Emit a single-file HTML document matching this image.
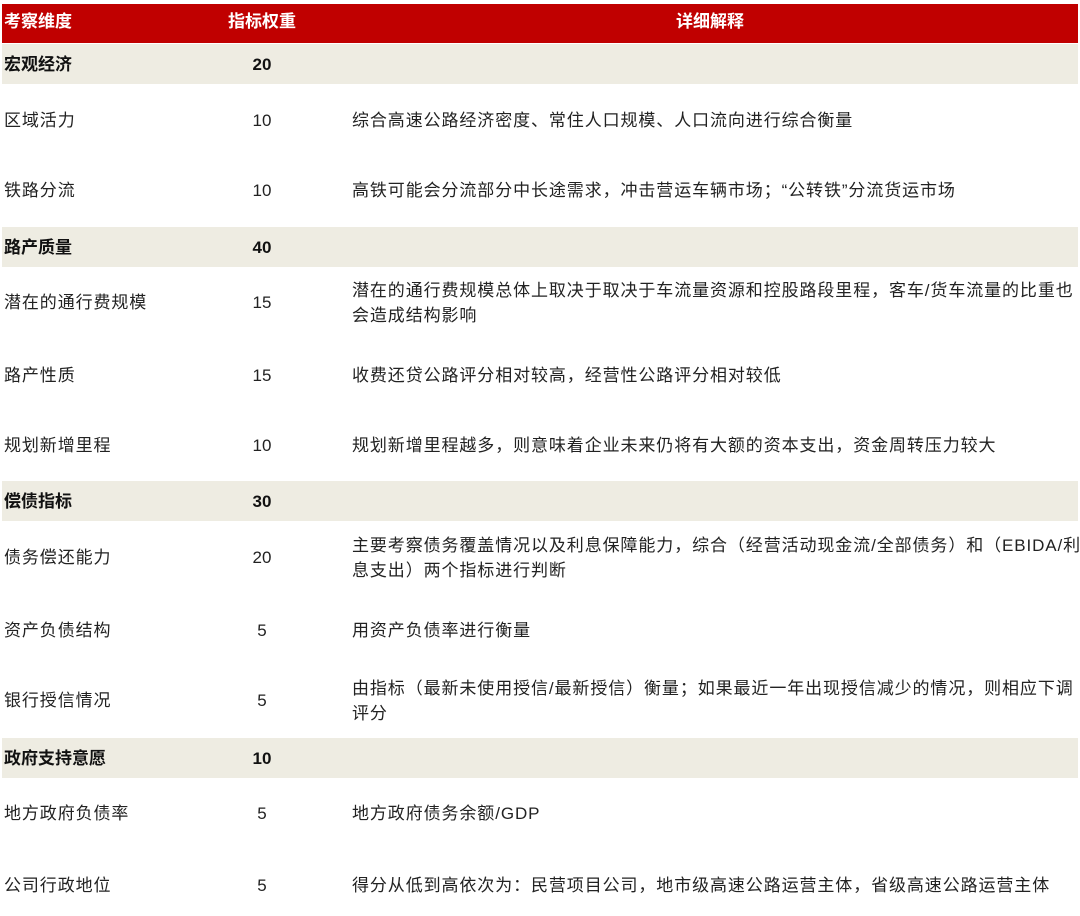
<!DOCTYPE html>
<html><head><meta charset="utf-8"><style>
body{margin:0;width:1080px;height:916px;background:#fff;position:relative;overflow:hidden;font-family:"Liberation Sans","Noto Sans CJK SC",sans-serif;font-size:17px;color:#222;letter-spacing:0.9px}
.hd{position:absolute;left:2px;top:4px;width:1076px;height:39px;background:#c00000}
.band{position:absolute;left:2px;width:1076px;height:40px;background:#eeece2}
.t{position:absolute;line-height:25px;white-space:nowrap}
.w{color:#fff;font-weight:bold;letter-spacing:0}
.b{font-weight:bold;color:#111;letter-spacing:0}
.c2{left:222px;width:80px;text-align:center;letter-spacing:0}
.c1{left:4px}
.c3{left:352px}
</style></head><body>
<div class="hd"></div>
<div class="t w c1" style="top:9px">考察维度</div>
<div class="t w c2" style="top:9px">指标权重</div>
<div class="t w" style="left:676px;top:9px">详细解释</div>

<div class="band" style="top:44px"></div>
<div class="t b c1" style="top:52px">宏观经济</div><div class="t b c2" style="top:52px">20</div>
<div class="t c1" style="top:108px">区域活力</div><div class="t c2" style="top:108px">10</div>
<div class="t c3" style="top:108px">综合高速公路经济密度、常住人口规模、人口流向进行综合衡量</div>
<div class="t c1" style="top:178px">铁路分流</div><div class="t c2" style="top:178px">10</div>
<div class="t c3" style="top:178px">高铁可能会分流部分中长途需求，冲击营运车辆市场；“公转铁”分流货运市场</div>

<div class="band" style="top:227px"></div>
<div class="t b c1" style="top:235px">路产质量</div><div class="t b c2" style="top:235px">40</div>
<div class="t c1" style="top:290px">潜在的通行费规模</div><div class="t c2" style="top:290px">15</div>
<div class="t c3" style="top:278px">潜在的通行费规模总体上取决于取决于车流量资源和控股路段里程，客车/货车流量的比重也<br>会造成结构影响</div>
<div class="t c1" style="top:363px">路产性质</div><div class="t c2" style="top:363px">15</div>
<div class="t c3" style="top:363px">收费还贷公路评分相对较高，经营性公路评分相对较低</div>
<div class="t c1" style="top:433px">规划新增里程</div><div class="t c2" style="top:433px">10</div>
<div class="t c3" style="top:433px">规划新增里程越多，则意味着企业未来仍将有大额的资本支出，资金周转压力较大</div>

<div class="band" style="top:481px"></div>
<div class="t b c1" style="top:489px">偿债指标</div><div class="t b c2" style="top:489px">30</div>
<div class="t c1" style="top:545px">债务偿还能力</div><div class="t c2" style="top:545px">20</div>
<div class="t c3" style="top:533px">主要考察债务覆盖情况以及利息保障能力，综合（经营活动现金流/全部债务）和（EBIDA/利<br>息支出）两个指标进行判断</div>
<div class="t c1" style="top:618px">资产负债结构</div><div class="t c2" style="top:618px">5</div>
<div class="t c3" style="top:618px">用资产负债率进行衡量</div>
<div class="t c1" style="top:688px">银行授信情况</div><div class="t c2" style="top:688px">5</div>
<div class="t c3" style="top:676px">由指标（最新未使用授信/最新授信）衡量；如果最近一年出现授信减少的情况，则相应下调<br>评分</div>

<div class="band" style="top:738px"></div>
<div class="t b c1" style="top:746px">政府支持意愿</div><div class="t b c2" style="top:746px">10</div>
<div class="t c1" style="top:801px">地方政府负债率</div><div class="t c2" style="top:801px">5</div>
<div class="t c3" style="top:801px">地方政府债务余额/GDP</div>
<div class="t c1" style="top:873px">公司行政地位</div><div class="t c2" style="top:873px">5</div>
<div class="t c3" style="top:873px">得分从低到高依次为：民营项目公司，地市级高速公路运营主体，省级高速公路运营主体</div>
</body></html>
